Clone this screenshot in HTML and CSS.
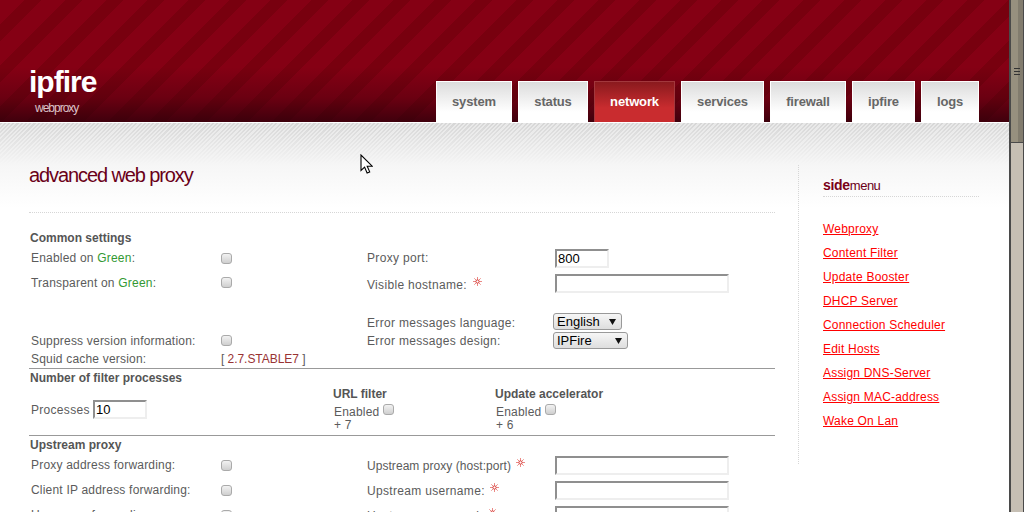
FILE: index.html
```html
<!DOCTYPE html>
<html lang="en">
<head>
<meta charset="utf-8">
<title>ipfire - advanced web proxy</title>
<link rel="stylesheet" href="styles.css">
</head>
<body>
<div class="viewport">
  <div class="page">
    <header class="masthead">
      <div class="brand">
        <h1 class="logo">ipfire</h1>
        <p class="tagline">webproxy</p>
      </div>
      <nav class="tabs">
        <a class="tab">system</a>
        <a class="tab">status</a>
        <a class="tab active">network</a>
        <a class="tab">services</a>
        <a class="tab">firewall</a>
        <a class="tab">ipfire</a>
        <a class="tab">logs</a>
      </nav>
    </header>
    <div class="content">
      <main class="main">
        <h2 class="title">advanced web proxy</h2>
        <section class="form-section common">
          <h3 class="sect-head">Common settings</h3>
          <div class="grid">
            <div class="row r-first">
              <span class="c1">Enabled on <span class="green">Green</span>:</span>
              <span class="c2"><input type="checkbox" class="check"></span>
              <span class="c3">Proxy port:</span>
              <span class="c4"><input class="field small" value="800"></span>
            </div>
            <div class="row r-second">
              <span class="c1">Transparent on <span class="green">Green</span>:</span>
              <span class="c2"><input type="checkbox" class="check"></span>
              <span class="c3 lower">Visible hostname: <svg class="star" viewBox="0 0 9 9"><path d="M4.5 0v9M0 4.5h9M1.3 1.3l6.4 6.4M7.7 1.3L1.3 7.7"/><circle cx="4.5" cy="4.5" r="1.6"/></svg></span>
              <span class="c4"><input class="field wide"></span>
            </div>
            <div class="row r-38">
              <span class="c3">Error messages language:</span>
              <span class="c4 sel-cell"><span class="select w-english"><select class="sel"><option>English</option></select></span></span>
            </div>
            <div class="row r-19">
              <span class="c1">Suppress version information:</span>
              <span class="c2"><input type="checkbox" class="check"></span>
              <span class="c3">Error messages design:</span>
              <span class="c4 sel-cell"><span class="select w-ipfire"><select class="sel"><option>IPFire</option></select></span></span>
            </div>
            <div class="row r-18">
              <span class="c1">Squid cache version:</span>
              <span class="c2 tight">[ <span class="version">2.7.STABLE7</span> ]</span>
            </div>
          </div>
        </section>
        <section class="form-section filter">
          <h3 class="sect-head">Number of filter processes</h3>
          <div class="filter-row">
            <div class="proc"><span class="proc-label">Processes</span><input class="field proc-field" value="10"></div>
            <div class="addon addon-url">
              <h3 class="sect-head">URL filter</h3>
              <div class="addon-line">Enabled <input type="checkbox" class="check raised"></div>
              <div class="addon-line">+ 7</div>
            </div>
            <div class="addon">
              <h3 class="sect-head">Update accelerator</h3>
              <div class="addon-line">Enabled <input type="checkbox" class="check raised"></div>
              <div class="addon-line">+ 6</div>
            </div>
          </div>
        </section>
        <section class="form-section upstream">
          <h3 class="sect-head">Upstream proxy</h3>
          <div class="grid">
            <div class="row r-25">
              <span class="c1">Proxy address forwarding:</span>
              <span class="c2"><input type="checkbox" class="check"></span>
              <span class="c3 tight-label">Upstream proxy (host:port) <svg class="star" viewBox="0 0 9 9"><path d="M4.5 0v9M0 4.5h9M1.3 1.3l6.4 6.4M7.7 1.3L1.3 7.7"/><circle cx="4.5" cy="4.5" r="1.6"/></svg></span>
              <span class="c4"><input class="field wide"></span>
            </div>
            <div class="row r-25">
              <span class="c1">Client IP address forwarding:</span>
              <span class="c2"><input type="checkbox" class="check"></span>
              <span class="c3">Upstream username: <svg class="star" viewBox="0 0 9 9"><path d="M4.5 0v9M0 4.5h9M1.3 1.3l6.4 6.4M7.7 1.3L1.3 7.7"/><circle cx="4.5" cy="4.5" r="1.6"/></svg></span>
              <span class="c4"><input class="field wide"></span>
            </div>
            <div class="row r-25">
              <span class="c1">Username forwarding:</span>
              <span class="c2"><input type="checkbox" class="check"></span>
              <span class="c3">Upstream password: <svg class="star" viewBox="0 0 9 9"><path d="M4.5 0v9M0 4.5h9M1.3 1.3l6.4 6.4M7.7 1.3L1.3 7.7"/><circle cx="4.5" cy="4.5" r="1.6"/></svg></span>
              <span class="c4"><input class="field wide"></span>
            </div>
          </div>
        </section>
      </main>
      <aside class="side">
        <h3 class="side-title"><b>side</b>menu</h3>
        <ul class="side-list">
          <li><a href="#">Webproxy</a></li>
          <li><a href="#">Content Filter</a></li>
          <li><a href="#">Update Booster</a></li>
          <li><a href="#">DHCP Server</a></li>
          <li><a href="#">Connection Scheduler</a></li>
          <li><a href="#">Edit Hosts</a></li>
          <li><a href="#">Assign DNS-Server</a></li>
          <li><a href="#">Assign MAC-address</a></li>
          <li><a href="#">Wake On Lan</a></li>
        </ul>
      </aside>
    </div>
  </div>
  <div class="scrollbar">
    <div class="thumb"><span class="grip"></span></div>
  </div>
  <svg class="cursor" viewBox="0 0 13 20" width="13" height="20"><path d="M1 1v15.5l3.6-3.4 2.5 5.9 2.6-1.1-2.5-5.7h5z" fill="#fff" stroke="#000" stroke-width="1.1"/></svg>
</div>
</body>
</html>
```
FILE: styles.css
```css
* { box-sizing: border-box; }
html, body { margin: 0; padding: 0; height: 512px; overflow: hidden; background: #fff; }
body { font: 12px "Liberation Sans", Arial, sans-serif; color: #5b5b5b; letter-spacing: 0.2px; }
.viewport { position: relative; display: flex; width: 1024px; height: 512px; overflow: hidden; }
.page { width: 1009px; flex: none; height: 512px; overflow: hidden; }

.masthead {
  height: 123px;
  display: flex;
  justify-content: space-between;
  align-items: flex-end;
  padding: 0 30px 0;
  border-bottom: 1px solid #fff;
  background:
    linear-gradient(to bottom, rgba(40,0,10,0) 55%, rgba(40,0,10,.28) 80%, rgba(40,0,10,.75) 100%),
    repeating-linear-gradient(135deg, #850014 0, #850014 17px, #78000f 17px, #78000f 29px);
}
.logo { margin: 0 0 0 -1px; font-size: 30px; line-height: 30px; font-weight: bold; color: #fff; letter-spacing: -1px; }
.brand { padding-bottom: 7px; }
.tagline { margin: 4px 0 0 5px; font-size: 12px; line-height: 14px; color: #dcc3c8; letter-spacing: -1px; }
.tabs { display: grid; grid-template-columns: 76px 70px 81px 83px 76px 63px 58px; gap: 6px; }
.tab {
  height: 41px;
  padding-bottom: 2px;
  display: flex;
  align-items: center;
  justify-content: center;
  font-size: 13px;
  font-weight: bold;
  color: #666;
  letter-spacing: -.15px;
  background: linear-gradient(to bottom, #dcdcdc, #fff 75%);
  border: 1px solid #fff;
  border-bottom: 0;
}
.tab.active {
  color: #fff;
  background: linear-gradient(to bottom, #8a1a1e, #c92c2f 65%);
  border-color: #a2383d;
}

.content {
  display: flex;
  height: 389px;
  background:
    linear-gradient(to bottom, rgba(247,247,247,0), #f6f6f6 42px, #fff 85px),
    repeating-linear-gradient(135deg, #d6d6d6 0, #d6d6d6 1.5px, #e8e8e8 1.5px, #e8e8e8 3px);
}
.main { width: 746px; margin-left: 29px; flex: none; }
.title {
  margin: 0;
  height: 90px;
  padding-top: 40px;
  font-size: 20px;
  line-height: 24px;
  font-weight: normal;
  color: #6a0018;
  letter-spacing: -1.1px;
  border-bottom: 1px dotted #d6d6d6;
}
.form-section { border-bottom: 1px solid #999; padding-left: 1px; }
.common { padding-top: 16px; height: 156px; }
.common .grid { margin-top: 1px; }
.filter { height: 67px; }
.upstream { border-bottom: 0; }
.upstream .sect-head { margin-bottom: -1px; }
.upstream .c1, .upstream .c2 { padding-bottom: 1px; }
.sect-head { margin: 0; font-size: 12px; line-height: 18px; font-weight: bold; color: #555; letter-spacing: 0; }
.grid { display: flex; flex-direction: column; padding-left: 1px; }
.row { display: grid; grid-template-columns: 190px 146px 188px 1fr; align-items: center; }
.r-first { height: 20px; }
.r-first .c4, .r-second .c4 { align-self: end; }
.r-second { height: 25px; padding-top: 4px; }
.r-18 { height: 18px; }
.r-19 { height: 19px; }
.r-25 { height: 25px; }
.r-38 { height: 38px; align-items: end; padding-bottom: 1px; }
.c1 { grid-column: 1; }
.c2 { grid-column: 2; }
.c3 { grid-column: 3; letter-spacing: .32px; }
.c4 { grid-column: 4; }
.tight-label { letter-spacing: .05px; }
.lower { padding-top: 4px; }
.sel-cell { margin-left: -2px; }
.tight { letter-spacing: -.05px; }
.green { color: #339933; }
.version { color: #993333; }
.star { width: 9px; height: 9px; margin-left: 2px; vertical-align: 3px; stroke: #ea8a86; stroke-width: 1; fill: #fff; }
.star circle { stroke: #d8403c; }

.check {
  appearance: none;
  -webkit-appearance: none;
  display: block;
  width: 11px;
  height: 11px;
  margin: 0;
  border: 1px solid #aaa;
  border-radius: 3px;
  background: linear-gradient(to bottom, #f2f2f2, #cfcfcf);
}
.field {
  display: block;
  height: 19px;
  padding: 0 1px;
  border: 2px solid;
  border-color: #8f8f8f #eee #eee #8f8f8f;
  background: #fff;
  font: 13px "Liberation Sans", Arial, sans-serif;
  color: #000;
  letter-spacing: 0;
  outline: 0;
}
.small { width: 54px; }
.wide { width: 174px; }
.select { position: relative; display: inline-block; vertical-align: top; }
.select::after {
  content: "";
  position: absolute;
  top: 6px;
  right: 6px;
  width: 7px;
  height: 6px;
  background: #111;
  clip-path: polygon(0 0, 100% 0, 50% 100%);
  pointer-events: none;
}
.sel {
  appearance: none;
  -webkit-appearance: none;
  display: block;
  height: 17px;
  padding: 0 0 0 3px;
  border: 1px solid #999;
  border-radius: 3px;
  background: linear-gradient(to bottom, #f6f6f6, #dedede);
  font: 13px "Liberation Sans", Arial, sans-serif;
  letter-spacing: 0;
  color: #000;
}
.w-english .sel { width: 69px; }
.w-ipfire .sel { width: 75px; }

.filter-row { display: flex; height: 48px; }
.proc { width: 303px; display: flex; align-items: center; height: 32px; padding: 13px 0 0 1px; }
.proc-label { width: 62px; flex: none; letter-spacing: .3px; }
.proc-field { width: 54px; }
.addon { width: 162px; }
.addon .sect-head { line-height: 15px; }
.addon-line { display: flex; align-items: center; gap: 4px; height: 10px; padding-left: 1px; }
.addon-line:nth-child(2) { height: 17px; margin-top: 1px; }
.raised { margin-top: -5px; }

.side {
  width: 181px;
  height: 299px;
  margin: 42px 0 0 23px;
  padding-left: 24px;
  border-left: 1px dotted #d6d6d6;
}
.side-title {
  margin: 0;
  height: 32px;
  padding-top: 12px;
  font-size: 13px;
  line-height: 16px;
  font-weight: normal;
  color: #6a0018;
  letter-spacing: -.5px;
  border-bottom: 1px dotted #d6d6d6;
}
.side-title b { color: #7a0018; font-size: 14px; letter-spacing: -.3px; }
.side-list { list-style: none; margin: 20px 0 0; padding: 0; }
.side-list li { height: 24px; line-height: 24px; }
.side-list a { color: #f00; }

.scrollbar { flex: none; width: 15px; height: 512px; background: #c6bfb4; border-left: 2px solid #4a4a4a; border-right: 1px solid #4a4a4a; }
.thumb {
  height: 143px;
  border-bottom: 1px solid #4a4a4a;
  background: linear-gradient(to right, #97907f 0, #97907f 7px, #827c6e 7px);
  display: flex;
  justify-content: center;
  padding-top: 68px;
}
.grip { display: block; width: 6px; height: 7px; border-top: 1px solid #333; border-bottom: 1px solid #333; background: linear-gradient(#333,#333) center/100% 1px no-repeat; }
.cursor { position: absolute; left: 360px; top: 154px; }
```
